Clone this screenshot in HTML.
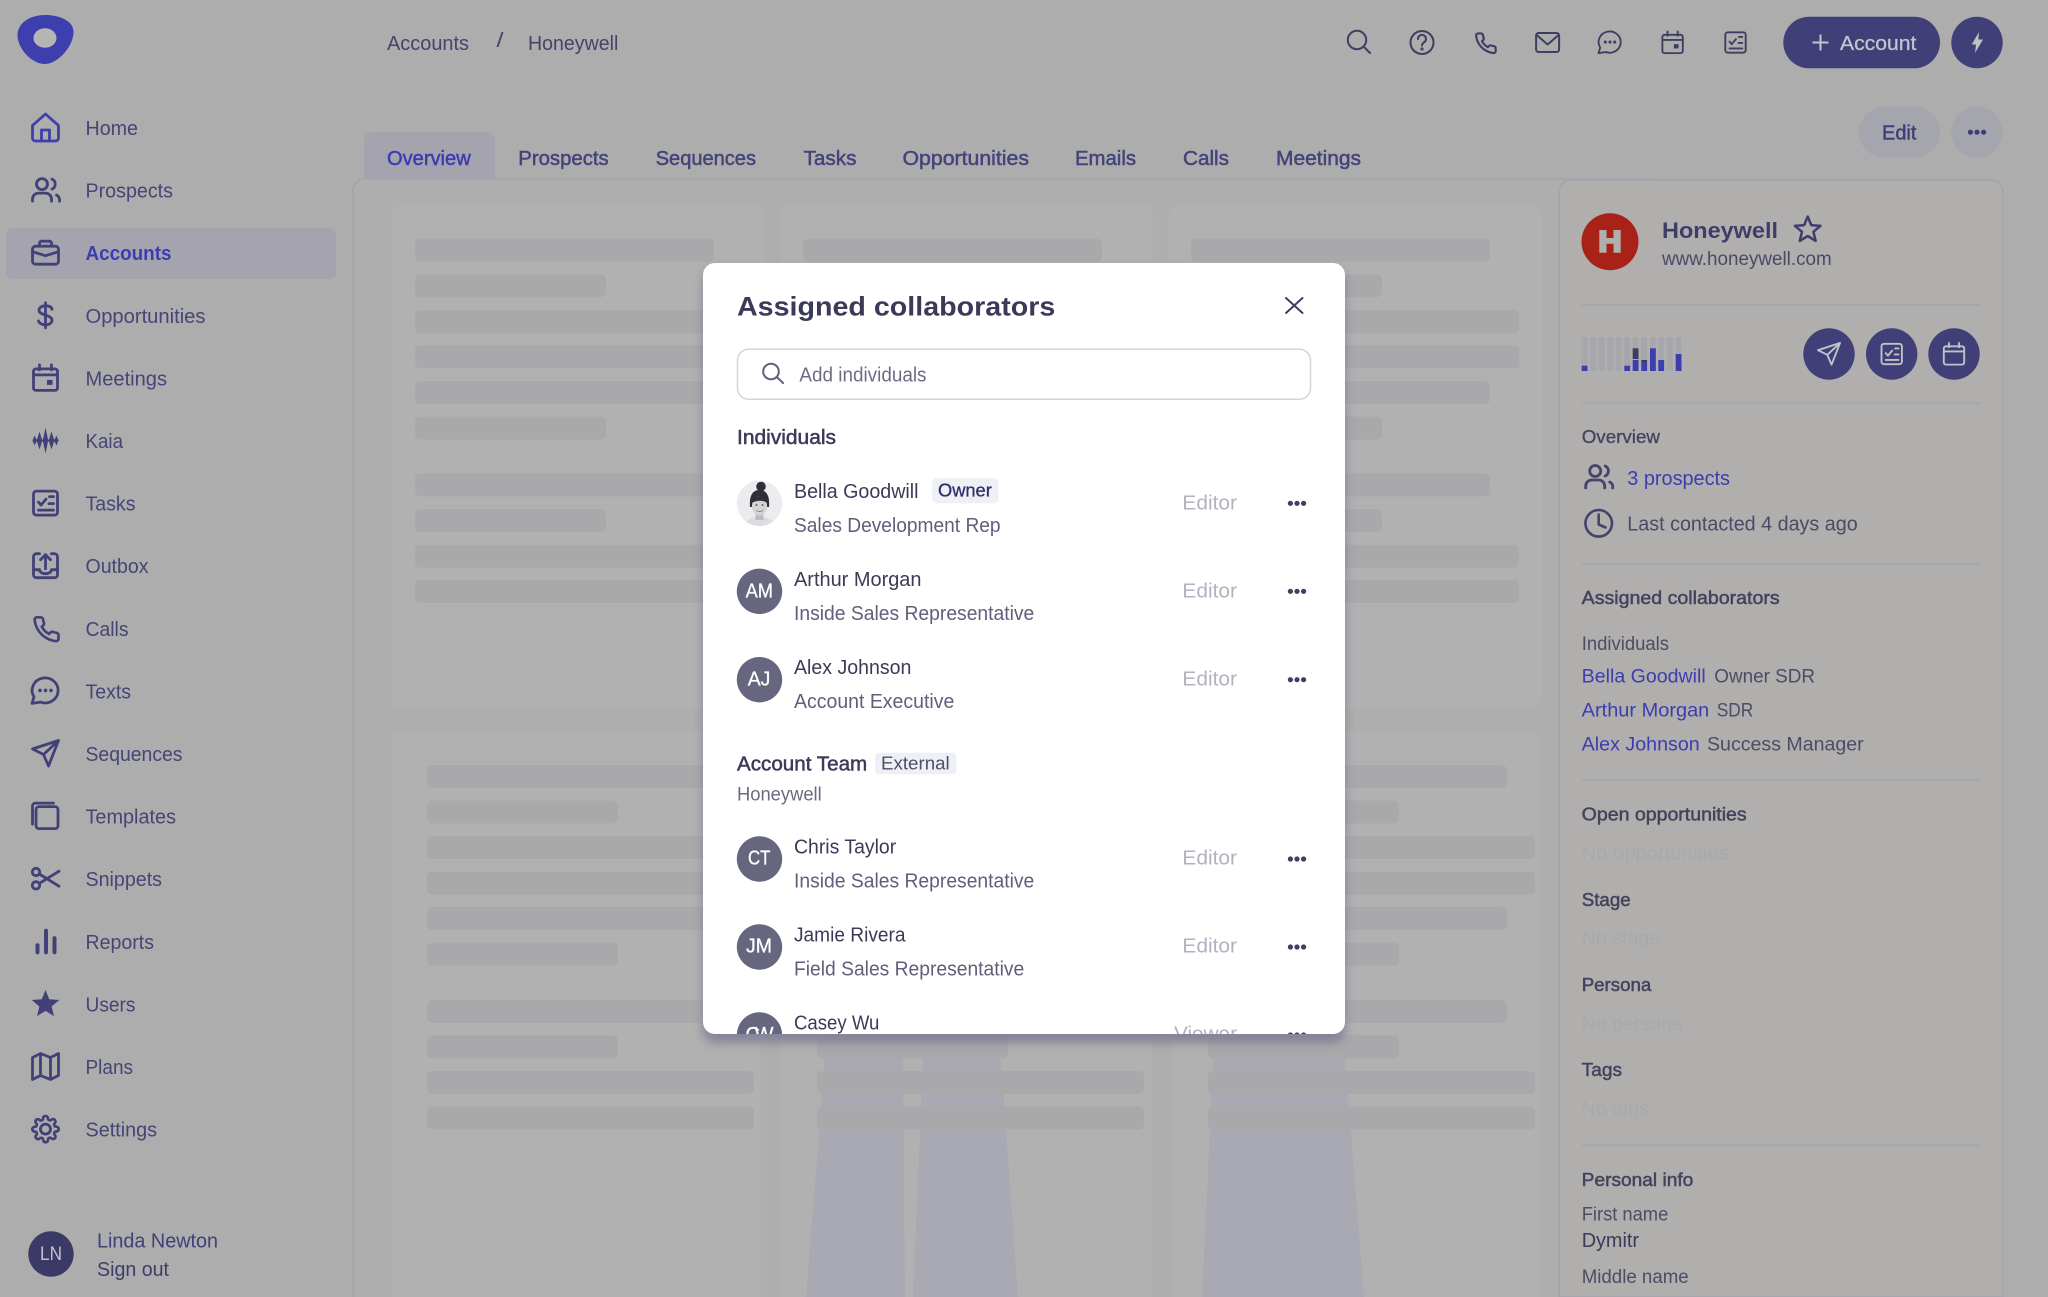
<!DOCTYPE html>
<html lang="en">
<head>
<meta charset="utf-8">
<title>Honeywell - Assigned collaborators</title>
<style>
html,body{margin:0;padding:0;background:#adadad;width:2048px;height:1297px;overflow:hidden}
svg{display:block}
text{font-family:"Liberation Sans",Arial,sans-serif;white-space:pre}
.nav{font-size:20.5px;fill:#454576}
.m{stroke:currentColor;stroke-width:.3px}
.s{stroke:currentColor;stroke-width:.5px}
.ic{fill:none;stroke:#414178;stroke-width:2.8;stroke-linecap:round;stroke-linejoin:round}
.tp{fill:none;stroke:#3e3e62;stroke-width:2.2;stroke-linecap:round;stroke-linejoin:round}
.wh{fill:none;stroke:#c2c2c6;stroke-width:2.2;stroke-linecap:round;stroke-linejoin:round}
.tab{font-size:20.5px;fill:#44447c;color:#44447c}
.h{font-size:18.8px;fill:#43435f;color:#43435f}
.b{font-size:19px;fill:#4c4c66}
.l{font-size:19px;fill:#3b3db0}
.no{font-size:19px;fill:#a9a9ab}
.nm{font-size:20.5px;fill:#3b3b59}
.rl{font-size:20.5px;fill:#5f5f7c}
.ed{font-size:20.5px;fill:#b2b2c0}
.in{font-size:20px;fill:#fff;color:#fff}
</style>
</head>
<body>
<svg xmlns="http://www.w3.org/2000/svg" width="2048" height="1297" viewBox="0 0 2048 1297">
<defs>
<g id="i-home"><path d="M-13 -2 L0 -13.5 L13 -2 V10.5 a3 3 0 0 1 -3 3 H-10 a3 3 0 0 1 -3 -3 Z"/><path d="M-4 13 V2.500 h8 V13"/></g>
<g id="i-people"><circle cx="-3.5" cy="-6" r="5.5"/><path d="M-13 11 v-2 a6 6 0 0 1 6 -6 h7 a6 6 0 0 1 6 6 v2"/><path d="M6.5 -11 a5.5 5.5 0 0 1 0 10"/><path d="M14 11 v-1.5 a5 5 0 0 0 -3 -4.5"/></g>
<g id="i-case"><rect x="-13" y="-6.5" width="26" height="18" rx="3"/><path d="M-6 -7 V-9.5 a2 2 0 0 1 2 -2 h8 a2 2 0 0 1 2 2 V-7"/><path d="M-13 -1 L0 3 L13 -1"/></g>
<g id="i-dollar"><path d="M6.5 -6 C6 -8.5 3.5 -9.5 0 -9.5 C-4 -9.5 -6.5 -7.5 -6.5 -5 C-6.5 0.5 6.5 -1 6.5 5 C6.5 7.5 4 9.5 0 9.5 C-4 9.5 -6.5 7.5 -7 5.5 M0 -12.5 V12.5"/></g>
<g id="i-cal"><rect x="-12" y="-9" width="24" height="21.5" rx="2.5"/><path d="M-12 -3 H12 M-6 -13 V-8 M6 -13 V-8"/><rect x="1.5" y="2" width="5.5" height="5" fill="currentColor" stroke="none"/></g>
<g id="i-kaia"><path stroke="none" fill="#414178" d="M-13 -1 H-12.500 L-11 -5 L-9 -1 H-8.500 L-6 -9 L-3.500 -1 H-2.500 L0 -13 L2.500 -1 H3.500 L6 -9 L8.500 -1 H9 L11 -5 L12.500 -1 H13 V1 H12.500 L11 5 L9 1 H8.500 L6 9 L3.500 1 H2.500 L0 13 L-2.500 1 H-3.500 L-6 9 L-8.500 1 H-9 L-11 5 L-12.500 1 H-13 Z"/></g>
<g id="i-tasks"><rect x="-12" y="-12" width="24" height="24" rx="3"/><path d="M-7 -1 l2.5 3 l5 -6 M4 -6.5 H8 M3.5 0.5 H8 M-7 7 H8"/></g>
<g id="i-outbox"><path d="M-6 -12 H-9 a3 3 0 0 0 -3 3 V9 a3 3 0 0 0 3 3 H9 a3 3 0 0 0 3 -3 V-9 a3 3 0 0 0 -3 -3 H6"/><path d="M-12 4 H-6 a6 4 0 0 0 12 0 H12"/><path d="M0 3 V-11 M-5 -6 L0 -11 L5 -6"/></g>
<g id="i-phone"><path transform="translate(-13.4,-13.4) scale(1.2)" d="M22 16.92v3a2 2 0 0 1-2.18 2 19.79 19.79 0 0 1-8.63-3.07 19.5 19.5 0 0 1-6-6 19.79 19.79 0 0 1-3.07-8.67A2 2 0 0 1 4.11 2h3a2 2 0 0 1 2 1.72 12.84 12.84 0 0 0 .7 2.81 2 2 0 0 1-.45 2.11L8.09 9.91a16 16 0 0 0 6 6l1.27-1.27a2 2 0 0 1 2.11-.45 12.84 12.84 0 0 0 2.81.7A2 2 0 0 1 22 16.92z" stroke-width="2.2"/></g>
<g id="i-chat"><path d="M-13.5 12.5 L-11.5 6 A13 12.5 0 1 1 -5 11.2 Z"/><circle cx="-5.5" cy="-0.5" r="1.8" fill="currentColor" stroke="none"/><circle cx="0" cy="-0.5" r="1.8" fill="currentColor" stroke="none"/><circle cx="5.5" cy="-0.5" r="1.8" fill="currentColor" stroke="none"/></g>
<g id="i-send"><path d="M13 -13 L-13 -4.5 L-2 1 L3 12.5 Z M-2 1 L13 -13"/></g>
<g id="i-tmpl"><rect x="-9.5" y="-9.5" width="22" height="22" rx="3"/><path d="M-13 8 V-10 a3 3 0 0 1 3 -3 H8"/></g>
<g id="i-sci"><circle cx="-9.500" cy="-6.700" r="3.700"/><circle cx="-9.500" cy="6.700" r="3.700"/><path d="M-6.200 -4.700 L13.500 7.500 M-6.200 4.700 L13.500 -7.500"/></g>
<g id="i-rep"><path d="M-8 4 V11 M0.5 -10.5 V11 M9 -3 V11" stroke-width="4"/></g>
<g id="i-map"><path d="M-13 -9 L-5 -13 L5 -9 L13 -13 V9 L5 13 L-5 9 L-13 13 Z M-5 -13 V9 M5 -9 V13"/></g>
<g id="i-gear"><circle r="5"/><path transform="translate(-14.4,-14.4) scale(1.2)" stroke-width="2.2" d="M19.4 15a1.65 1.65 0 0 0 .33 1.82l.06.06a2 2 0 0 1 0 2.83 2 2 0 0 1-2.83 0l-.06-.06a1.65 1.65 0 0 0-1.82-.33 1.65 1.65 0 0 0-1 1.51V21a2 2 0 0 1-2 2 2 2 0 0 1-2-2v-.09A1.65 1.65 0 0 0 9 19.4a1.65 1.65 0 0 0-1.82.33l-.06.06a2 2 0 0 1-2.83 0 2 2 0 0 1 0-2.83l.06-.06a1.65 1.65 0 0 0 .33-1.82 1.65 1.65 0 0 0-1.51-1H3a2 2 0 0 1-2-2 2 2 0 0 1 2-2h.09A1.65 1.65 0 0 0 4.6 9a1.65 1.65 0 0 0-.33-1.82l-.06-.06a2 2 0 0 1 0-2.83 2 2 0 0 1 2.83 0l.06.06a1.65 1.65 0 0 0 1.82.33H9a1.65 1.65 0 0 0 1-1.51V3a2 2 0 0 1 2-2 2 2 0 0 1 2 2v.09a1.65 1.65 0 0 0 1 1.51 1.65 1.65 0 0 0 1.82-.33l.06-.06a2 2 0 0 1 2.83 0 2 2 0 0 1 0 2.83l-.06.06a1.65 1.65 0 0 0-.33 1.82V9a1.65 1.65 0 0 0 1.51 1H21a2 2 0 0 1 2 2 2 2 0 0 1-2 2h-.09a1.65 1.65 0 0 0-1.51 1z"/></g>
<g id="dots"><circle cx="-6.6" r="2.6"/><circle r="2.6"/><circle cx="6.6" r="2.6"/></g>
<g id="bars1" fill="#a9a9ab">
<rect y="238.6" width="299" height="23" rx="5"/><rect y="274.2" width="191" height="23" rx="5"/><rect y="310.2" width="328" height="23" rx="5"/><rect y="345.4" width="328" height="23" rx="5"/><rect y="381" width="299" height="23" rx="5"/><rect y="416.6" width="191" height="23" rx="5"/><rect y="473.5" width="299" height="23" rx="5"/><rect y="509" width="191" height="23" rx="5"/><rect y="544.7" width="328" height="23" rx="5"/><rect y="580" width="328" height="23" rx="5"/>
</g>
<g id="bars2" fill="#a9a9ab">
<rect y="765" width="299" height="23" rx="5"/><rect y="800.5" width="191" height="23" rx="5"/><rect y="836" width="327" height="23" rx="5"/><rect y="871.6" width="327" height="23" rx="5"/><rect y="907" width="299" height="23" rx="5"/><rect y="942.7" width="191" height="23" rx="5"/><rect y="1000" width="299" height="23" rx="5"/><rect y="1035.4" width="191" height="23" rx="5"/><rect y="1071" width="327" height="23" rx="5"/><rect y="1106.5" width="327" height="23" rx="5"/>
</g>
<clipPath id="modalclip"><rect x="703" y="263" width="642" height="771" rx="12"/></clipPath>
<clipPath id="avclip"><circle cx="759.5" cy="503.3" r="22.7"/></clipPath>
<filter id="blur" x="-10%" y="-10%" width="120%" height="120%"><feGaussianBlur stdDeviation="5"/></filter>
</defs>

<rect width="2048" height="1297" fill="#adadad"/>

<!-- logo -->
<path d="M45 15 C58 15 73.500 20 73.500 32 C73.500 47 57 64 45 64 C31 64 17.500 48 17.500 35 C17.500 23 30 15 45 15 Z" fill="#3d3fae"/>
<ellipse cx="45" cy="38" rx="11.500" ry="9.800" fill="#b5b5b5"/>

<!-- sidebar -->
<rect x="6" y="228" width="330" height="51" rx="6" fill="#a5a4ae"/>
<g class="ic" color="#414178">
<use href="#i-home" x="45.5" y="127.5" style="stroke:#3e3fa8"/>
<use href="#i-people" x="45.5" y="190.1"/>
<use href="#i-case" x="45.5" y="252.7"/>
<use href="#i-dollar" x="45.5" y="315.3"/>
<use href="#i-cal" x="45.5" y="377.9"/>
<use href="#i-kaia" x="45.5" y="440.5"/>
<use href="#i-tasks" x="45.5" y="503.1"/>
<use href="#i-outbox" x="45.5" y="565.7"/>
<use href="#i-phone" x="45.5" y="628.3"/>
<use href="#i-chat" x="45.5" y="690.9"/>
<use href="#i-send" x="45.5" y="753.5"/>
<use href="#i-tmpl" x="45.5" y="816.1"/>
<use href="#i-sci" x="45.5" y="878.7"/>
<use href="#i-rep" x="45.5" y="941.3"/>
<polygon transform="translate(45.5,1004.5) scale(1.07)" points="0,-13.5 3.53,-4.85 12.84,-4.17 5.71,1.85 7.94,10.92 0,6 -7.94,10.92 -5.71,1.85 -12.84,-4.17 -3.53,-4.85" fill="#414178" stroke="none"/>
<use href="#i-map" x="45.5" y="1066.5"/>
<use href="#i-gear" x="45.5" y="1129.1"/>
</g>
<g class="nav">
<text x="85.5" y="135" textLength="52.500" lengthAdjust="spacingAndGlyphs">Home</text>
<text x="85.5" y="197.6" textLength="87.500" lengthAdjust="spacingAndGlyphs">Prospects</text>
<text x="85.5" y="260.2" textLength="86" lengthAdjust="spacingAndGlyphs" style="fill:#3b3db0;font-weight:bold">Accounts</text>
<text x="85.5" y="322.8" textLength="120" lengthAdjust="spacingAndGlyphs">Opportunities</text>
<text x="85.5" y="385.4" textLength="81.500" lengthAdjust="spacingAndGlyphs">Meetings</text>
<text x="85.5" y="448" textLength="37.500" lengthAdjust="spacingAndGlyphs">Kaia</text>
<text x="85.5" y="510.6" textLength="50" lengthAdjust="spacingAndGlyphs">Tasks</text>
<text x="85.5" y="573.2" textLength="63" lengthAdjust="spacingAndGlyphs">Outbox</text>
<text x="85.5" y="635.8" textLength="43" lengthAdjust="spacingAndGlyphs">Calls</text>
<text x="85.5" y="698.4" textLength="45.500" lengthAdjust="spacingAndGlyphs">Texts</text>
<text x="85.5" y="761" textLength="97" lengthAdjust="spacingAndGlyphs">Sequences</text>
<text x="85.5" y="823.6" textLength="90.500" lengthAdjust="spacingAndGlyphs">Templates</text>
<text x="85.5" y="886.2" textLength="76.500" lengthAdjust="spacingAndGlyphs">Snippets</text>
<text x="85.5" y="948.8" textLength="68.500" lengthAdjust="spacingAndGlyphs">Reports</text>
<text x="85.5" y="1011.4" textLength="50" lengthAdjust="spacingAndGlyphs">Users</text>
<text x="85.5" y="1074" textLength="47.500" lengthAdjust="spacingAndGlyphs">Plans</text>
<text x="85.5" y="1136.6" textLength="71.500" lengthAdjust="spacingAndGlyphs">Settings</text>
</g>
<circle cx="51" cy="1254" r="22.7" fill="#3b3a66"/>
<text x="40" y="1260" font-size="19.5" fill="#c4c4c8" textLength="22" lengthAdjust="spacingAndGlyphs">LN</text>
<text x="97" y="1247.7" font-size="20.5" fill="#40407a" textLength="121" lengthAdjust="spacingAndGlyphs">Linda Newton</text>
<text x="97" y="1276" font-size="20.5" fill="#3f3e66" textLength="72" lengthAdjust="spacingAndGlyphs">Sign out</text>

<!-- header -->
<text x="387" y="50" font-size="20.5" fill="#44446a" textLength="82" lengthAdjust="spacingAndGlyphs">Accounts</text>
<text x="496.5" y="47" font-size="20" fill="#44446a" textLength="7" lengthAdjust="spacingAndGlyphs">/</text>
<text x="528" y="50" font-size="20.5" fill="#44446a" textLength="90.300" lengthAdjust="spacingAndGlyphs">Honeywell</text>

<g class="tp" color="#3e3e62">
<g transform="translate(1359,42)" stroke-width="2"><circle cx="-2" cy="-2" r="9.2"/><path d="M4.800 4.800 L11 11"/></g>
<g stroke-width="2"><ellipse cx="1422" cy="42.500" rx="11.500" ry="11.500"/>
<path d="M1418 39 a4 4 0 1 1 6.500 3 c-1.500 1 -2.500 1.800 -2.500 3.500" />
<circle cx="1422" cy="49" r=".6"/></g>
<use href="#i-phone" transform="translate(1485,42.500) scale(.82)"/>
<g transform="translate(1547.6,42.500)" stroke-width="2"><rect x="-11.500" y="-9.500" width="23" height="19" rx="2.500"/><path d="M-11 -7.500 L0 2 L11 -7.500"/></g>
<use href="#i-chat" transform="translate(1610,42.500) scale(.85)"/>
<use href="#i-cal" transform="translate(1672.6,42.500) scale(.85)"/>
<use href="#i-tasks" transform="translate(1735.5,42.500) scale(.85)"/>
</g>

<rect x="1783.3" y="16.7" width="156.7" height="51.6" rx="25.8" fill="#403f78"/>
<path d="M1820.5 34.500 V50.500 M1812.500 42.500 H1828.500" stroke="#c4c4cc" stroke-width="2" fill="none"/>
<text x="1840" y="50" font-size="20.5" fill="#c4c4cc" color="#c4c4cc" class="m" textLength="76.400" lengthAdjust="spacingAndGlyphs">Account</text>
<circle cx="1977" cy="42.500" r="25.700" fill="#403f78"/>
<polygon points="1979,32 1971.700,44.500 1976,44.500 1975,53 1983,39.500 1978.300,39.500" fill="#c0c0c6"/>
<rect x="1859" y="106.700" width="81" height="51" rx="25.500" fill="#a5a5ad"/>
<text x="1882" y="139.300" font-size="20.500" fill="#3f3f78" color="#3f3f78" class="s" textLength="34.400" lengthAdjust="spacingAndGlyphs">Edit</text>
<circle cx="1977" cy="132.200" r="25.700" fill="#a5a5ad"/>
<use href="#dots" x="1977" y="132.200" fill="#3f3f78"/>

<!-- tabs -->
<path d="M364 178 V140 a8 8 0 0 1 8 -8 H487 a8 8 0 0 1 8 8 V178 Z" fill="#a5a4ae"/>
<g class="tab">
<text x="387" y="165" class="s" style="fill:#3b3db0;color:#3b3db0" textLength="83.700" lengthAdjust="spacingAndGlyphs">Overview</text>
<text x="518.300" y="165" class="s" textLength="90.400" lengthAdjust="spacingAndGlyphs">Prospects</text>
<text x="655.700" y="165" class="s" textLength="100.300" lengthAdjust="spacingAndGlyphs">Sequences</text>
<text x="803.500" y="165" class="s" textLength="53" lengthAdjust="spacingAndGlyphs">Tasks</text>
<text x="902.500" y="165" class="s" textLength="126.500" lengthAdjust="spacingAndGlyphs">Opportunities</text>
<text x="1075" y="165" class="s" textLength="61" lengthAdjust="spacingAndGlyphs">Emails</text>
<text x="1183" y="165" class="s" textLength="46" lengthAdjust="spacingAndGlyphs">Calls</text>
<text x="1276" y="165" class="s" textLength="85" lengthAdjust="spacingAndGlyphs">Meetings</text>
</g>

<!-- main panel -->
<path d="M353 1297 V191 a12 12 0 0 1 12 -12 H1653 V1297" fill="#aeaeae" stroke="#a4a4ac" stroke-width="1.500"/>
<rect x="392" y="204" width="373" height="505" rx="12" fill="#b1b1b1"/>
<rect x="781" y="204" width="372" height="505" rx="12" fill="#b1b1b1"/>
<rect x="1169" y="204" width="373" height="505" rx="12" fill="#b1b1b1"/>
<path d="M392 1297 V743 a12 12 0 0 1 12 -12 H749 a12 12 0 0 1 12 12 V1297 Z" fill="#b1b1b1"/>
<path d="M780 1297 V743 a12 12 0 0 1 12 -12 H1140 a12 12 0 0 1 12 12 V1297 Z" fill="#b1b1b1"/>
<path d="M1172 1297 V743 a12 12 0 0 1 12 -12 H1529 a12 12 0 0 1 12 12 V1297 Z" fill="#b1b1b1"/>
<polygon points="826,1045 903,1045 905,1297 806,1297" fill="#a9a9b4"/>
<polygon points="923.600,1045 1000,1045 1018,1297 913,1297" fill="#a9a9b4"/>
<polygon points="1214,1045 1344,1045 1364,1297 1202,1297" fill="#a9a9b4"/>
<use href="#bars1" x="415"/><use href="#bars1" x="803"/><use href="#bars1" x="1191"/>
<use href="#bars2" x="427"/><use href="#bars2" x="817"/><use href="#bars2" x="1208"/>

<!-- right panel -->
<path d="M1559.300 1297 V192 a12 12 0 0 1 12 -12 H1990.700 a12 12 0 0 1 12 12 V1297 Z" fill="#b0afad" stroke="#a3a4ae" stroke-width="1.500"/>
<circle cx="1610" cy="241.700" r="28.500" fill="#a92217"/>
<path d="M1599.300 230 h7.200 v8 h7 v-8 h7.200 v22.700 h-7.200 v-9 h-7 v9 h-7.200 Z" fill="#b0afad"/>
<text x="1662" y="238" font-size="22.500" font-weight="bold" fill="#3f3e6a" textLength="116" lengthAdjust="spacingAndGlyphs">Honeywell</text>
<polygon transform="translate(1807.700,230)" points="0,-13.500 3.530,-4.850 12.840,-4.170 5.710,1.850 7.940,10.920 0,6 -7.940,10.920 -5.710,1.850 -12.840,-4.170 -3.530,-4.850" fill="none" stroke="#3f3e6a" stroke-width="2.500" stroke-linejoin="round"/>
<text x="1662" y="265" font-size="19.500" fill="#4a4a68" textLength="169.700" lengthAdjust="spacingAndGlyphs">www.honeywell.com</text>
<path d="M1581.700 305 H1979.700 M1581.700 403 H1979.700 M1581.700 563.700 H1979.700 M1581.700 780 H1979.700 M1581.700 1145.300 H1979.700" stroke="#a4a5ad" stroke-width="1.500" fill="none"/>
<!-- activity chart -->
<g fill="#a6a6ac">
<rect x="1581.700" y="337" width="5.800" height="34"/><rect x="1590.300" y="337" width="5.800" height="34"/><rect x="1598.700" y="337" width="5.800" height="34"/><rect x="1607.300" y="337" width="5.800" height="34"/><rect x="1615.700" y="337" width="5.800" height="34"/><rect x="1624.300" y="337" width="5.800" height="34"/><rect x="1632.700" y="337" width="5.800" height="34"/><rect x="1641.300" y="337" width="5.800" height="34"/><rect x="1650" y="337" width="5.800" height="34"/><rect x="1658.300" y="337" width="5.800" height="34"/><rect x="1667" y="337" width="5.800" height="34"/><rect x="1675.700" y="337" width="5.800" height="34"/>
</g>
<g fill="#3b3db0">
<rect x="1581.700" y="365.700" width="5.800" height="5.300"/><rect x="1624.300" y="365.700" width="5.800" height="5.300"/><rect x="1632.700" y="360" width="5.800" height="11"/><rect x="1641.300" y="362.700" width="5.800" height="8.300"/><rect x="1650" y="348.300" width="5.800" height="22.700"/><rect x="1658.300" y="360" width="5.800" height="11"/><rect x="1675.700" y="354" width="5.800" height="17"/>
</g>
<g fill="#3d3c60"><rect x="1632.700" y="348.300" width="5.800" height="10.700"/><rect x="1641.300" y="360" width="5.800" height="2.700"/></g>
<circle cx="1829" cy="354" r="25.700" fill="#403f78"/>
<circle cx="1891.700" cy="354" r="25.700" fill="#403f78"/>
<circle cx="1954" cy="354" r="25.700" fill="#403f78"/>
<use href="#i-send" class="wh" transform="translate(1829,354) scale(.85)"/>
<use href="#i-tasks" class="wh" color="#c2c2c6" transform="translate(1891.700,354) scale(.85)"/>
<use href="#i-cal" class="wh" color="#403f78" transform="translate(1954,354) scale(.85)"/>

<text x="1581.700" y="443" class="h m" textLength="78.300" lengthAdjust="spacingAndGlyphs">Overview</text>
<use href="#i-people" class="ic" style="stroke:#44446a" x="1598.700" y="477"/>
<text x="1627.300" y="485" font-size="20.500" fill="#3b3db0" textLength="102.700" lengthAdjust="spacingAndGlyphs">3 prospects</text>
<g fill="none" stroke="#44446a" stroke-width="2.600" stroke-linecap="round" stroke-linejoin="round"><circle cx="1598.700" cy="523.300" r="13.300"/><path d="M1598.700 514.500 V524.500 L1605.500 527.500"/></g>
<text x="1627.300" y="530.700" font-size="20.500" fill="#4a4a68" textLength="230.400" lengthAdjust="spacingAndGlyphs">Last contacted 4 days ago</text>

<text x="1581.700" y="604" class="h s" textLength="198" lengthAdjust="spacingAndGlyphs">Assigned collaborators</text>
<text x="1581.700" y="650" class="b" textLength="87.300" lengthAdjust="spacingAndGlyphs">Individuals</text>
<text x="1581.700" y="682.400" class="l" textLength="124" lengthAdjust="spacingAndGlyphs">Bella Goodwill</text>
<text x="1714.300" y="682.400" class="b" textLength="100.700" lengthAdjust="spacingAndGlyphs">Owner SDR</text>
<text x="1581.700" y="716.600" class="l" textLength="127.600" lengthAdjust="spacingAndGlyphs">Arthur Morgan</text>
<text x="1716.700" y="716.600" class="b" textLength="36.600" lengthAdjust="spacingAndGlyphs">SDR</text>
<text x="1581.700" y="750.500" class="l" textLength="118" lengthAdjust="spacingAndGlyphs">Alex Johnson</text>
<text x="1707" y="750.500" class="b" textLength="156.700" lengthAdjust="spacingAndGlyphs">Success Manager</text>
<text x="1581.700" y="820.300" class="h s" textLength="165" lengthAdjust="spacingAndGlyphs">Open opportunities</text>
<text x="1581.700" y="859.300" class="no" textLength="147" lengthAdjust="spacingAndGlyphs">No opportunities</text>
<text x="1581.700" y="905.800" class="h s" textLength="49" lengthAdjust="spacingAndGlyphs">Stage</text>
<text x="1581.700" y="944.600" class="no" textLength="78.300" lengthAdjust="spacingAndGlyphs">No stage</text>
<text x="1581.700" y="991" class="h s" textLength="69.600" lengthAdjust="spacingAndGlyphs">Persona</text>
<text x="1581.700" y="1030" class="no" textLength="101" lengthAdjust="spacingAndGlyphs">No persona</text>
<text x="1581.700" y="1076" class="h s" textLength="40.300" lengthAdjust="spacingAndGlyphs">Tags</text>
<text x="1581.700" y="1115" class="no" textLength="67.300" lengthAdjust="spacingAndGlyphs">No tags</text>
<text x="1581.700" y="1186" class="h s" textLength="111.600" lengthAdjust="spacingAndGlyphs">Personal info</text>
<text x="1581.700" y="1220.400" class="b" textLength="86.600" lengthAdjust="spacingAndGlyphs">First name</text>
<text x="1581.700" y="1247" font-size="20" fill="#3a3a5a" textLength="57.300" lengthAdjust="spacingAndGlyphs">Dymitr</text>
<text x="1581.700" y="1283" class="b" textLength="107" lengthAdjust="spacingAndGlyphs">Middle name</text>

<!-- modal -->
<rect x="703" y="270" width="642" height="773" rx="12" fill="#76768f" opacity=".75" filter="url(#blur)"/>
<rect x="703" y="263" width="642" height="771" rx="12" fill="#ffffff"/>
<g clip-path="url(#modalclip)">
<text x="737" y="315.300" font-size="27" font-weight="bold" fill="#3b3b59" textLength="318.300" lengthAdjust="spacingAndGlyphs">Assigned collaborators</text>
<path d="M1286 298 L1302.500 313 M1302.500 298 L1286 313" stroke="#3d3d5e" stroke-width="2" stroke-linecap="round" fill="none"/>
<rect x="737.500" y="349.200" width="573" height="50" rx="11" fill="#fff" stroke="#d4d4de" stroke-width="1.500"/>
<g fill="none" stroke="#5f5f80" stroke-width="2" stroke-linecap="round"><circle cx="771" cy="371.500" r="7.800"/><path d="M776.800 377 L783 383"/></g>
<text x="799.400" y="381.300" font-size="20" fill="#6c6c85" textLength="127.100" lengthAdjust="spacingAndGlyphs">Add individuals</text>
<text x="737" y="444" font-size="20" fill="#3b3b59" color="#3b3b59" class="s" textLength="99" lengthAdjust="spacingAndGlyphs">Individuals</text>

<!-- row 1 photo avatar -->
<circle cx="759.500" cy="503.300" r="22.700" fill="#ececf0"/>
<g clip-path="url(#avclip)">
<path d="M741 530 Q746 517 759.500 516.500 Q774 517 778 530 Z" fill="#dcdcdf"/>
<rect x="755.500" y="512" width="8" height="8" fill="#bdbdc0"/>
<path d="M750 507 C749 495 753 490 759.500 490 C766 490 770 495 769 507 Z" fill="#2f2f38"/>
<circle cx="761" cy="486.500" r="4.800" fill="#2f2f38"/>
<ellipse cx="759.500" cy="506" rx="7.600" ry="9.500" fill="#d4d4d6"/>
<path d="M752 503 C753 498 757 496.500 760 496.500 C763 496.500 766.500 498.500 767 503 C764 500 756 500 752 503 Z" fill="#2f2f38"/>
<circle cx="756.500" cy="505" r=".9" fill="#444"/><circle cx="762.500" cy="505" r=".9" fill="#444"/>
<path d="M756 510.500 Q759.500 512.500 763 510.500" fill="none" stroke="#8d8d90" stroke-width="1"/>
</g>
<text x="794" y="498" class="nm" textLength="124.500" lengthAdjust="spacingAndGlyphs">Bella Goodwill</text>
<rect x="932" y="478" width="66.500" height="25.300" rx="5" fill="#eef0f6"/>
<text x="938" y="496.300" font-size="18.500" fill="#2e2e6a" color="#2e2e6a" class="m" textLength="53.800" lengthAdjust="spacingAndGlyphs">Owner</text>
<text x="794" y="532" class="rl" textLength="206.600" lengthAdjust="spacingAndGlyphs">Sales Development Rep</text>
<text x="1182.400" y="509.300" class="ed" textLength="54.600" lengthAdjust="spacingAndGlyphs">Editor</text>
<use href="#dots" x="1297" y="503.300" fill="#3f3f5f"/>

<circle cx="759.500" cy="591.300" r="22.700" fill="#67667f"/>
<text x="745.600" y="597.300" class="in m" textLength="27.400" lengthAdjust="spacingAndGlyphs">AM</text>
<text x="794" y="586" class="nm" textLength="127.500" lengthAdjust="spacingAndGlyphs">Arthur Morgan</text>
<text x="794" y="620" class="rl" textLength="240.300" lengthAdjust="spacingAndGlyphs">Inside Sales Representative</text>
<text x="1182.400" y="597.300" class="ed" textLength="54.600" lengthAdjust="spacingAndGlyphs">Editor</text>
<use href="#dots" x="1297" y="591.300" fill="#3f3f5f"/>

<circle cx="759.500" cy="679.700" r="22.700" fill="#67667f"/>
<text x="747.700" y="685.700" class="in m" textLength="22.700" lengthAdjust="spacingAndGlyphs">AJ</text>
<text x="794" y="674" class="nm" textLength="117.400" lengthAdjust="spacingAndGlyphs">Alex Johnson</text>
<text x="794" y="708" class="rl" textLength="160.300" lengthAdjust="spacingAndGlyphs">Account Executive</text>
<text x="1182.400" y="685.600" class="ed" textLength="54.600" lengthAdjust="spacingAndGlyphs">Editor</text>
<use href="#dots" x="1297" y="679.700" fill="#3f3f5f"/>

<text x="737" y="770.700" font-size="20" fill="#3b3b59" color="#3b3b59" class="s" textLength="130.200" lengthAdjust="spacingAndGlyphs">Account Team</text>
<rect x="875.200" y="752.700" width="81.200" height="21.600" rx="4" fill="#eef0f6"/>
<text x="881" y="769.300" font-size="18.500" fill="#4d4d6a" textLength="68.700" lengthAdjust="spacingAndGlyphs">External</text>
<text x="737" y="800.700" font-size="19" fill="#6a6a80" textLength="84.700" lengthAdjust="spacingAndGlyphs">Honeywell</text>

<circle cx="759.500" cy="859" r="22.700" fill="#67667f"/>
<text x="748" y="864.700" class="in m" textLength="22.400" lengthAdjust="spacingAndGlyphs">CT</text>
<text x="794" y="853.300" class="nm" textLength="102.200" lengthAdjust="spacingAndGlyphs">Chris Taylor</text>
<text x="794" y="887.300" class="rl" textLength="240.300" lengthAdjust="spacingAndGlyphs">Inside Sales Representative</text>
<text x="1182.400" y="864.700" class="ed" textLength="54.600" lengthAdjust="spacingAndGlyphs">Editor</text>
<use href="#dots" x="1297" y="859" fill="#3f3f5f"/>

<circle cx="759.500" cy="947" r="22.700" fill="#67667f"/>
<text x="746" y="952.700" class="in m" textLength="26" lengthAdjust="spacingAndGlyphs">JM</text>
<text x="794" y="941.300" class="nm" textLength="111.500" lengthAdjust="spacingAndGlyphs">Jamie Rivera</text>
<text x="794" y="975.300" class="rl" textLength="230.200" lengthAdjust="spacingAndGlyphs">Field Sales Representative</text>
<text x="1182.400" y="952.700" class="ed" textLength="54.600" lengthAdjust="spacingAndGlyphs">Editor</text>
<use href="#dots" x="1297" y="947" fill="#3f3f5f"/>

<circle cx="759.500" cy="1035" r="22.700" fill="#67667f"/>
<text x="745.500" y="1041" class="in m" textLength="28">CW</text>
<text x="794" y="1029.300" class="nm" textLength="85.400" lengthAdjust="spacingAndGlyphs">Casey Wu</text>
<text x="1174" y="1040.500" class="ed" textLength="63" lengthAdjust="spacingAndGlyphs">Viewer</text>
<use href="#dots" x="1297" y="1035" fill="#3f3f5f"/>
</g>
</svg>
</body>
</html>
